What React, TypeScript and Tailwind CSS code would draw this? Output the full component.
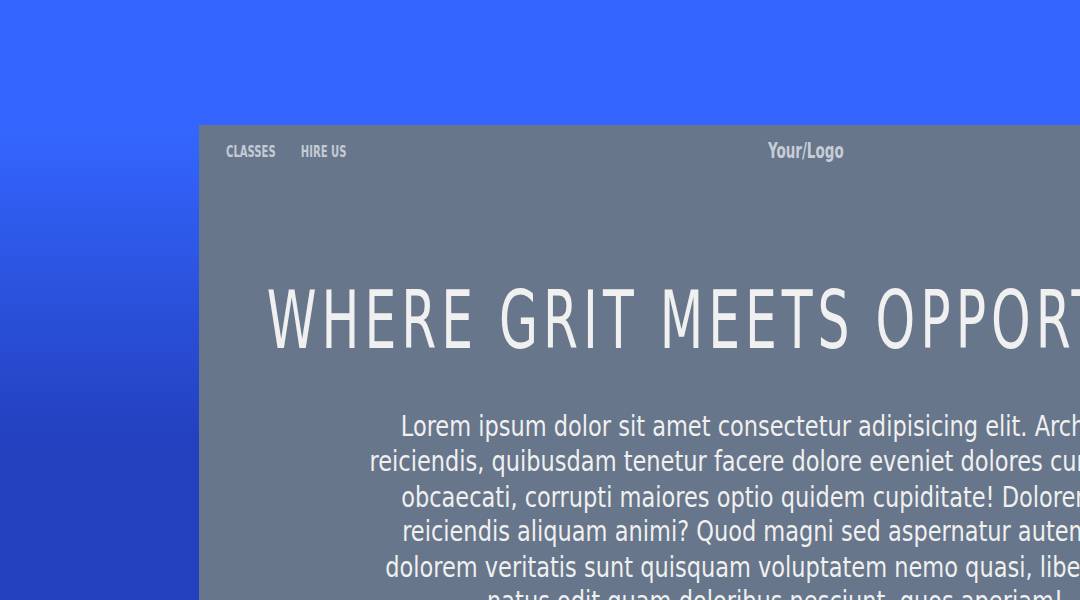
import React from "react";

const narrow = {
  fontFamily:
    '"Liberation Sans Narrow", "DejaVu Sans Condensed", "Liberation Sans", sans-serif',
};

export default function App() {
  const lines = [
    "Lorem ipsum dolor sit amet consectetur adipisicing elit. Architecto",
    "reiciendis, quibusdam tenetur facere dolore eveniet dolores cumque illo",
    "obcaecati, corrupti maiores optio quidem cupiditate! Dolorem rem",
    "reiciendis aliquam animi? Quod magni sed aspernatur autem fuga",
    "dolorem veritatis sunt quisquam voluptatem nemo quasi, libero illum",
    "natus odit quam doloribus nesciunt, quos aperiam!",
  ];
  return (
    <div
      className="h-[600px] w-full overflow-hidden bg-gradient-to-b from-[#3466ff] from-[21%] to-[#2341bf] to-[73%] pt-[125px] pl-[199px]"
      style={narrow}
    >
      <div className="w-[1152px] h-[600px] bg-[#67768a]">
        <header className="flex items-center px-[27px] pt-[13px]">
          <nav className="flex w-[542px] items-center gap-[25px] pt-[5px] text-[11.2px] font-bold uppercase text-[#c3cbd6]">
            <a className="inline-block scale-y-[1.35]">Classes</a>
            <a className="inline-block scale-y-[1.35]">Hire Us</a>
          </nav>
          <div className="inline-block scale-y-[1.38] text-[15px] font-bold leading-[26px] text-[#c6cdd7]">
            Your/Logo
          </div>
        </header>
        <div className="mt-[128px] flex justify-center">
          <h1 className="inline-block scale-y-[1.42] text-[56px] font-normal leading-[58px] tracking-[5px] text-[#f0f0f0]">
            WHERE GRIT MEETS OPPORTUNITY
          </h1>
        </div>
        <p className="mt-[60px] origin-top scale-y-[1.15] text-center text-[25px] leading-[30.435px] text-[#f0f0f0]">
          {lines.map((l, i) => (
            <React.Fragment key={i}>
              {l}
              {i < lines.length - 1 && <br />}
            </React.Fragment>
          ))}
        </p>
      </div>
    </div>
  );
}
